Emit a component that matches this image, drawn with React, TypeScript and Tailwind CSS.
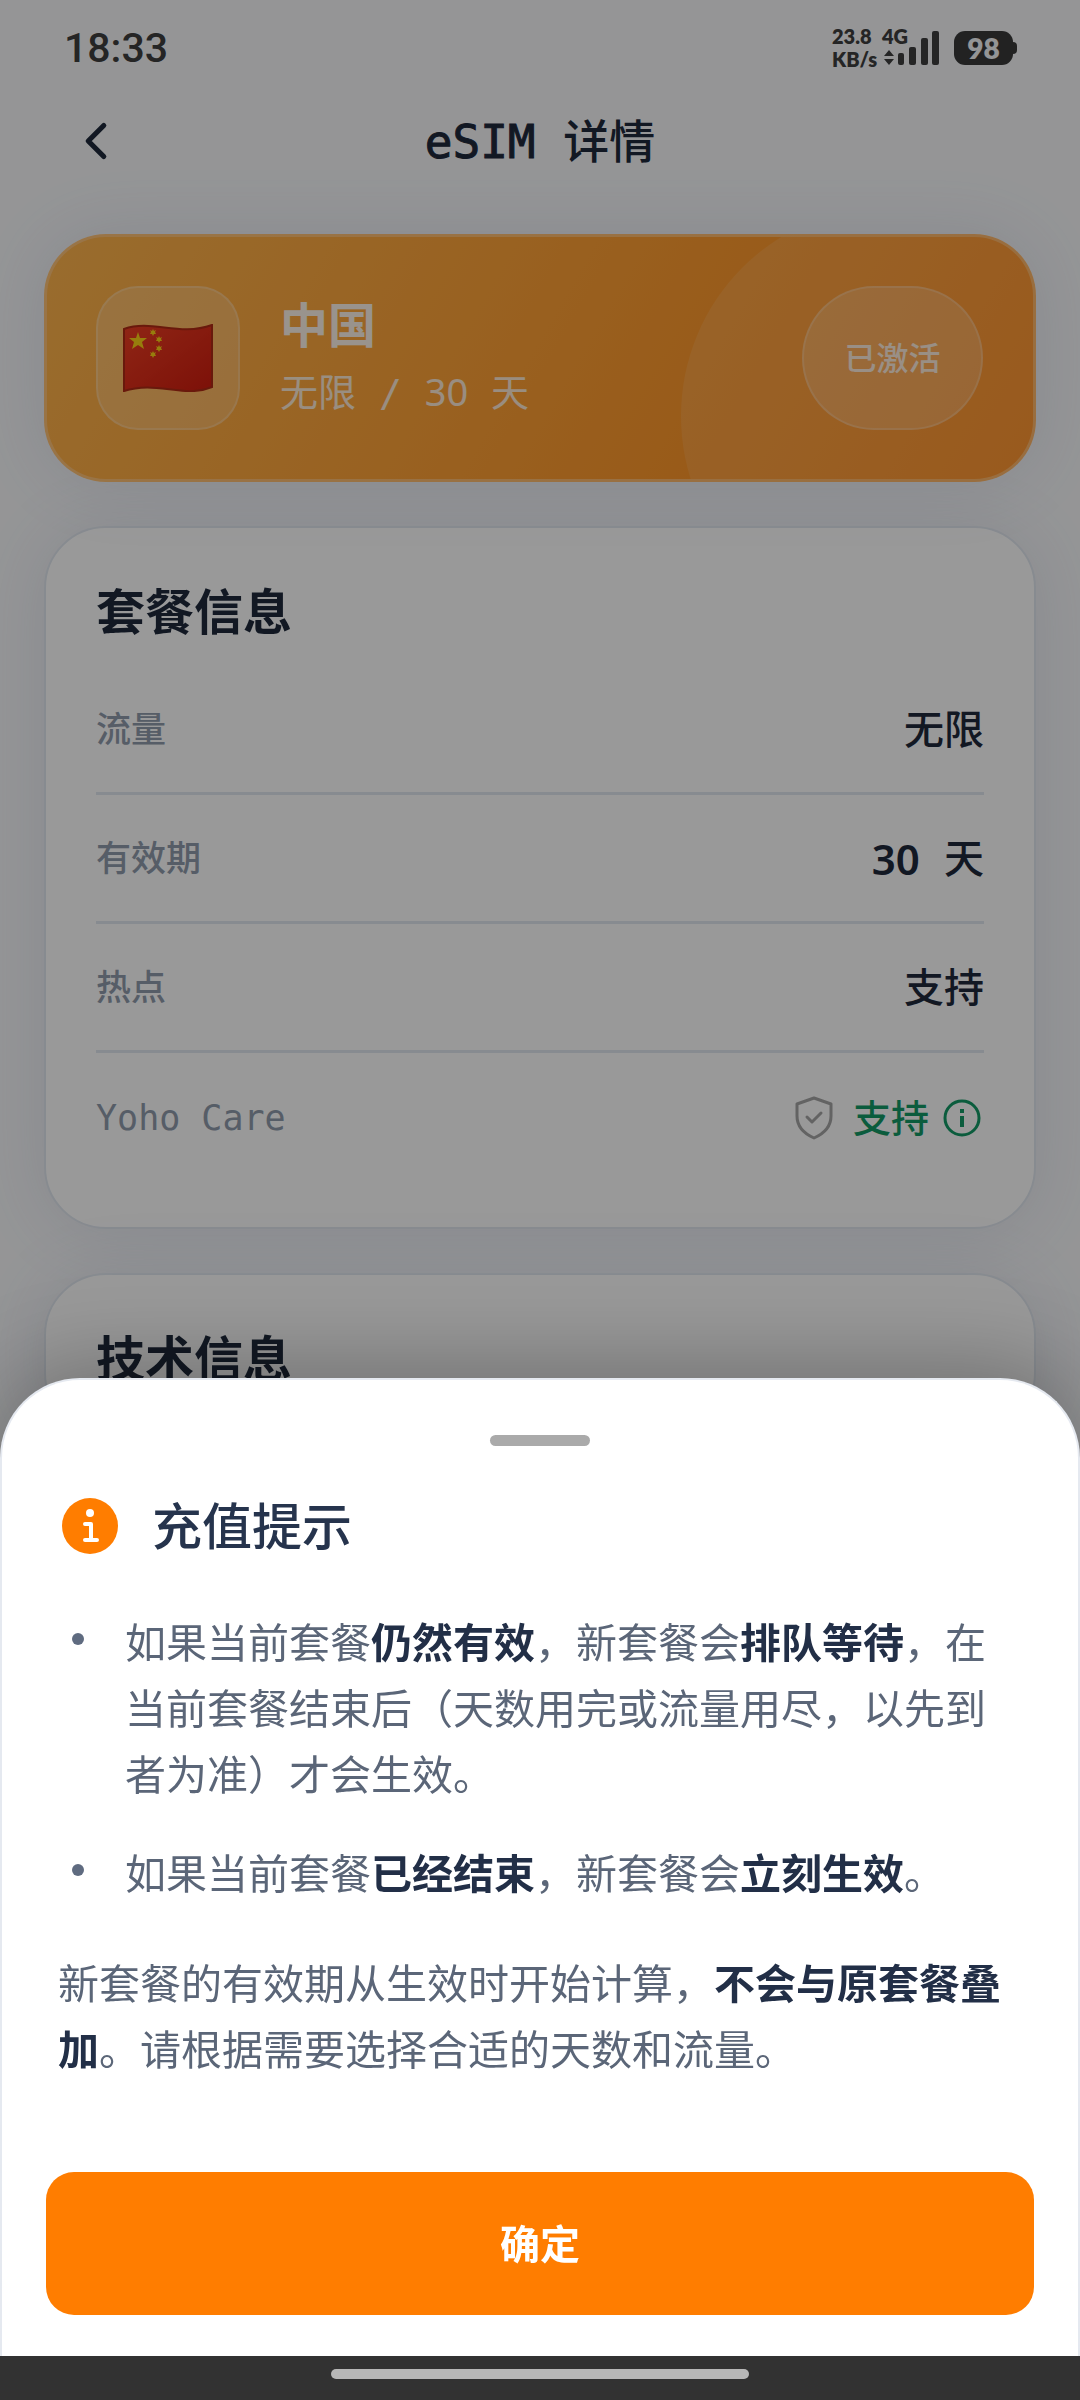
import { ChevronLeft } from 'lucide-react';
import type { ReactNode } from 'react';

function StatusBar() {
    return (
        <div className="flex h-[96px] items-center justify-between pr-[63px] pl-16 text-[#3f3f3f]">
            <time className="font-['Roboto',sans-serif] text-[41px] leading-[44px] font-medium">
                18:33
            </time>
            <div className="flex items-center font-['Lato','Noto_Sans',sans-serif] font-extrabold">
                <div className="grid grid-cols-[50px_58px] text-[20px] leading-[23px]">
                    <span>23.8</span>
                    <span>4G</span>
                    <span>KB/s</span>
                </div>
                <SignalIcon />
                <BatteryIcon level={98} />
            </div>
        </div>
    );
}

function SignalIcon() {
    return (
        <svg
            viewBox="0 0 56 34"
            className="-ml-[56px] h-[34px] w-[56px]"
            fill="currentColor"
            aria-hidden="true"
        >
            <path d="M5 19l5 6H0zM5 34l-5-6h10z" />
            <rect x="14" y="22" width="6" height="12" rx="2" />
            <rect x="25" y="16" width="7" height="18" rx="2" />
            <rect x="37" y="7" width="7" height="27" rx="2" />
            <rect x="48" y="0" width="7" height="34" rx="2" />
        </svg>
    );
}

function BatteryIcon({ level }: { level: number }) {
    return (
        <div className="ml-[14px] flex items-center">
            <span className="flex h-[34px] w-[59px] items-center justify-center rounded-[11px] bg-[#3a3a3a] text-[28px] leading-none text-[#f7f8fb]">
                {level}
            </span>
            <span className="h-[12px] w-[4px] rounded-r-sm bg-[#3a3a3a]" />
        </div>
    );
}

function ChinaFlag() {
    return (
        <svg viewBox="0 0 90 68" className="h-[68px] w-[90px]" role="img">
            <title>中国</title>
            <defs>
                <linearGradient id="flag-red" x1="0" y1="0" x2="1" y2="1">
                    <stop offset="0" stopColor="#ef3f24" />
                    <stop offset="1" stopColor="#d01c0e" />
                </linearGradient>
            </defs>
            <path
                d="M1 5C29-5 56 13 89 1v62C60 75 34 56 1 67z"
                fill="url(#flag-red)"
                stroke="#b02a14"
                strokeWidth="2"
            />
            <g fill="#fcd116">
                <path d="M15 8l2 6h7l-5 4 2 7-6-4-6 4 2-7-5-4h7z" />
                <path d="M30 5l1 2 2-1-1 2 1 2-2 0-1 2-1-2-2 0 1-2-1-2 2 1z" />
                <path d="M36 12l1 2 2-1-1 2 1 2-2 0-1 2-1-2-2 0 1-2-1-2 2 1z" />
                <path d="M36 21l1 2 2-1-1 2 1 2-2 0-1 2-1-2-2 0 1-2-1-2 2 1z" />
                <path d="M30 27l1 2 2-1-1 2 1 2-2 0-1 2-1-2-2 0 1-2-1-2 2 1z" />
            </g>
        </svg>
    );
}

function ShieldCheckIcon() {
    return (
        <svg
            viewBox="0 0 38 44"
            className="h-[44px] w-[38px] text-[#a5a5a5]"
            fill="none"
            stroke="currentColor"
            strokeWidth="3"
            strokeLinejoin="round"
            strokeLinecap="round"
            aria-hidden="true"
        >
            <path d="M19 2L36 8v12c0 11-8 18-17 22C10 38 2 31 2 20V8z" />
            <path d="M12 21l5 5 9-9" />
        </svg>
    );
}

function InfoCircleIcon() {
    return (
        <svg viewBox="0 0 38 38" className="size-[38px]" aria-hidden="true">
            <circle
                cx="19"
                cy="19"
                r="17"
                fill="none"
                stroke="currentColor"
                strokeWidth="3"
            />
            <path d="M17 10h4v4h-4zM17 17h4v11h-4z" fill="currentColor" />
        </svg>
    );
}

function InfoBadgeIcon() {
    return (
        <svg viewBox="0 0 56 56" className="size-[56px]" aria-hidden="true">
            <circle cx="28" cy="28" r="28" fill="#ff7d00" />
            <circle cx="28" cy="15" r="4" fill="#fff" />
            <path
                d="M23 26h6v16M23 42h12"
                fill="none"
                stroke="#fff"
                strokeWidth="4"
                strokeLinecap="round"
                strokeLinejoin="round"
            />
        </svg>
    );
}

// Latin text and blanks are set on a monospaced grid, digits are not.
function Mono({ children }: { children: ReactNode }) {
    return (
        <span className="font-['DejaVu_Sans_Mono','Liberation_Mono',monospace] whitespace-pre">
            {children}
        </span>
    );
}

function PlanBanner() {
    return (
        <section className="relative overflow-hidden rounded-[62px] border-3 border-[#ffc98a]/70 bg-linear-[120deg] from-[#ffb54d] to-[#ff8a1a] bg-origin-border py-[49px] pr-[50px] pl-[49px] shadow-[0_0_70px_rgba(100,116,160,0.14)]">
            <div className="absolute -top-[31px] -right-[68px] size-[420px] rounded-full bg-white/10" />
            <div className="relative flex items-center">
                <div className="flex size-[144px] items-center justify-center rounded-[42px] border-2 border-white/20 bg-white/18">
                    <ChinaFlag />
                </div>
                <div className="ml-10 flex-1 text-white/90">
                    <h2 className="text-[48px] leading-[68px] font-bold">
                        中国
                    </h2>
                    <p className="text-[38px] leading-[64px] text-white/80">
                        无限<Mono> / </Mono>30<Mono> </Mono>天
                    </p>
                </div>
                <span className="flex h-[144px] w-[181px] items-center justify-center rounded-full border-2 border-white/20 bg-white/18 text-[32px] font-medium text-white/80">
                    已激活
                </span>
            </div>
        </section>
    );
}

function Card({ title, children }: { title: string; children?: ReactNode }) {
    return (
        <section className="rounded-[62px] border-2 border-[#e2e8f0] bg-white px-[50px] pt-[53px] pb-[45px] shadow-[0_4px_70px_rgba(100,116,160,0.14)]">
            <h2 className="text-[49px] leading-[60px] font-bold text-[#1e293b]">
                {title}
            </h2>
            {children}
        </section>
    );
}

function InfoRow({ label, children }: { label: ReactNode; children: ReactNode }) {
    return (
        <div className="flex h-[129px] items-center justify-between border-b-3 border-[#e2e8f0] last:border-b-0">
            <dt className="text-[35px] font-medium text-[#8f9bac]">{label}</dt>
            <dd className="flex items-center text-[40px] font-medium text-[#1e293b]">
                {children}
            </dd>
        </div>
    );
}

function Strong({ children }: { children: ReactNode }) {
    return <strong className="font-bold text-[#222f47]">{children}</strong>;
}

function TipItem({ children }: { children: ReactNode }) {
    return (
        <li className="flex">
            <span className="mt-[24px] mr-[41px] ml-[14px] size-[12px] shrink-0 rounded-full bg-[#5f6b80]" />
            <span>{children}</span>
        </li>
    );
}

function TopUpSheet() {
    return (
        <div
            role="dialog"
            aria-modal="true"
            aria-labelledby="tip-title"
            className="fixed inset-x-0 bottom-0"
        >
            <div className="rounded-t-[80px] border-2 border-b-0 border-[#e5e9f0] bg-white px-11 pt-[55px] pb-[41px] shadow-[0_-10px_90px_rgba(0,0,0,0.28)]">
                <div className="mx-auto h-[11px] w-[100px] rounded-full bg-[#aaaaaa]" />
                <div className="px-3">
                    <div className="mt-[48px] flex items-center gap-[34px] px-1">
                        <InfoBadgeIcon />
                        <h2
                            id="tip-title"
                            className="text-[50px] leading-[64px] font-medium text-[#26344d]"
                        >
                            充值提示
                        </h2>
                    </div>
                    <div className="mt-[51px] text-[41px] leading-[66px] text-[#5b6678]">
                        <ul className="space-y-[33px]">
                            <TipItem>
                                如果当前套餐<Strong>仍然有效</Strong>，新套餐会
                                <Strong>排队等待</Strong>
                                ，在当前套餐结束后（天数用完或流量用尽，以先到者为准）才会生效。
                            </TipItem>
                            <TipItem>
                                如果当前套餐<Strong>已经结束</Strong>，新套餐会
                                <Strong>立刻生效</Strong>。
                            </TipItem>
                        </ul>
                        <p className="mt-[44px]">
                            新套餐的有效期从生效时开始计算，
                            <Strong>不会与原套餐叠加</Strong>
                            。请根据需要选择合适的天数和流量。
                        </p>
                    </div>
                </div>
                <button
                    type="button"
                    className="mt-[90px] h-[143px] w-full rounded-[28px] bg-[#ff7d00] text-[40px] font-bold text-white"
                >
                    确定
                </button>
            </div>
            <div className="flex h-[44px] items-start justify-center bg-[#323232] pt-[13px]">
                <div className="h-[10px] w-[418px] rounded-full bg-[#b7b7b7]" />
            </div>
        </div>
    );
}

export default function App() {
    return (
        <div className="h-screen overflow-hidden bg-[#f8f9fb] font-['Noto_Sans','Noto_Sans_CJK_SC',sans-serif]">
            <StatusBar />
            <header className="grid h-[90px] grid-cols-[1fr_auto_1fr] items-center px-[65px]">
                <button
                    type="button"
                    aria-label="返回"
                    className="w-fit text-[#1e293b]"
                >
                    <ChevronLeft className="size-[62px]" strokeWidth={2} />
                </button>
                <h1 className="text-[46px] leading-[60px] font-medium text-[#1e293b]">
                    <span className="[-webkit-text-stroke:1px_currentColor]">
                        <Mono>eSIM </Mono>
                    </span>
                    详情
                </h1>
            </header>
            <main className="flex flex-col gap-[44px] px-11 pt-[48px]">
                <PlanBanner />
                <Card title="套餐信息">
                    <dl className="mt-[25px]">
                        <InfoRow label="流量">无限</InfoRow>
                        <InfoRow label="有效期">
                            <span className="text-[42px] font-semibold">
                                30
                            </span>
                            <Mono> </Mono>天
                        </InfoRow>
                        <InfoRow label="热点">支持</InfoRow>
                        <InfoRow label={<Mono>Yoho Care</Mono>}>
                            <ShieldCheckIcon />
                            <button
                                type="button"
                                className="ml-[20px] flex items-center gap-[14px] pr-[3px] text-[38px] text-[#139a66]"
                            >
                                支持
                                <InfoCircleIcon />
                            </button>
                        </InfoRow>
                    </dl>
                </Card>
                <Card title="技术信息" />
            </main>
            <div className="fixed inset-0 bg-black/40" />
            <TopUpSheet />
        </div>
    );
}
